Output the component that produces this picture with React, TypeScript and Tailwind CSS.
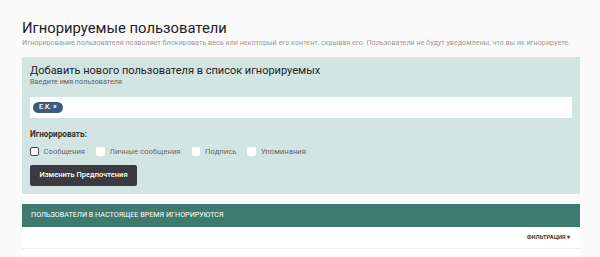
export default function App() {
  const options = ["Сообщения", "Личные сообщения", "Подпись", "Упоминания"];

  return (
    <div className="min-h-[257px] w-full bg-[#fafafa] font-['Roboto',sans-serif] px-[22px] pt-[19px]">
      <h1 className="text-[14.8px] leading-[18px] text-[#222]">Игнорируемые пользователи</h1>
      <p className="mt-[1px] text-[7.2px] leading-[10px] text-[#9a9a9a]">
        Игнорирование пользователя позволяет блокировать весь или некоторый его контент, скрывая его. Пользователи не будут уведомлены, что вы их игнорируете.
      </p>

      <div className="mt-[9px] w-[558px] bg-[#d3e5e3] px-[8px] pt-[8px] pb-[8px]">
        <h2 className="text-[11px] leading-[12px] text-[#222]">Добавить нового пользователя в список игнорируемых</h2>
        <p className="text-[7.2px] leading-[10px] text-[#666]">Введите имя пользователя</p>

        <div className="mt-[10px] flex h-[21px] items-center bg-white px-[3px]">
          <span className="flex h-[11px] items-center rounded-full bg-[#3b5b85] px-[6px] text-[7px] font-medium text-white">
            E.K. ×
          </span>
        </div>

        <p className="mt-[11px] text-[8.2px] font-bold leading-[11px] text-[#333]">Игнорировать:</p>

        <div className="mt-[7px] flex items-center gap-[11px]">
          {options.map((o, i) => (
            <label key={o} className="flex items-center gap-[5px] text-[7.7px] leading-[9px] text-[#666]">
              <span
                className={
                  i === 0
                    ? "h-[8.5px] w-[8.5px] rounded-[2px] border border-[#444] bg-white"
                    : "h-[8.5px] w-[8.5px] rounded-[2px] bg-white"
                }
              />
              {o}
            </label>
          ))}
        </div>

        <button className="mt-[8.5px] h-[21px] w-[107px] rounded-[2px] bg-[#3a3b40] text-[7.5px] font-medium text-white">
          Изменить Предпочтения
        </button>
      </div>

      <div className="mt-[10px] w-[558px]">
        <div className="flex h-[23px] items-center bg-[#3e7a6d] px-[9px] text-[7.2px] uppercase text-white">
          Пользователи в настоящее время игнорируются
        </div>
        <div className="flex h-[22px] items-center justify-end border-b border-[#eee] bg-white px-[10px]">
          <span className="text-[5.8px] font-bold uppercase text-[#444]">Фильтрация ▾</span>
        </div>
        <div className="h-[20px] bg-white" />
      </div>
    </div>
  );
}
